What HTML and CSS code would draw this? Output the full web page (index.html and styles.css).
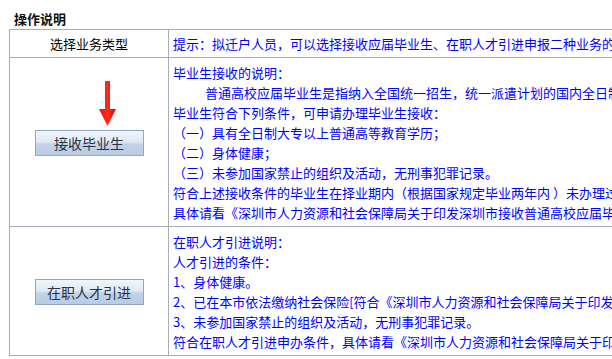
FILE: index.html
```html
<!DOCTYPE html>
<html lang="zh-CN">
<head>
    <meta charset="UTF-8">
    <title>操作说明</title>
    <link rel="stylesheet" href="styles.css">
</head>
<body>
    <div class="page">
        <h3 class="title">操作说明</h3>
        <table class="guide">
            <tr class="head">
                <td class="type">选择业务类型</td>
                <td class="info">提示：拟迁户人员，可以选择接收应届毕业生、在职人才引进申报二种业务的其中一种进行申报。</td>
            </tr>
            <tr>
                <td class="type">
                    <span class="btn-wrap">
                        <svg class="arrow" width="17" height="45" viewBox="0 0 17 45">
                            <defs>
                                <linearGradient id="red" x1="0" y1="0" x2="1" y2="0">
                                    <stop offset="0" stop-color="#e81010"/>
                                    <stop offset="0.5" stop-color="#ff2a1a"/>
                                    <stop offset="1" stop-color="#e00808"/>
                                </linearGradient>
                            </defs>
                            <path d="M6 0 H11 V28 H17 L8.5 45 L0 28 H6 Z" fill="url(#red)"/>
                        </svg>
                        <button class="btn">接收毕业生</button>
                    </span>
                </td>
                <td class="info">
                    <p>毕业生接收的说明：</p>
                    <p class="indent">普通高校应届毕业生是指纳入全国统一招生，统一派遣计划的国内全日制普通高校应届毕业生。</p>
                    <p>毕业生符合下列条件，可申请办理毕业生接收：</p>
                    <p>（一）具有全日制大专以上普通高等教育学历；</p>
                    <p>（二）身体健康；</p>
                    <p>（三）未参加国家禁止的组织及活动，无刑事犯罪记录。</p>
                    <p>符合上述接收条件的毕业生在择业期内（根据国家规定毕业两年内 ）未办理过就业手续的，可申请办理接收。</p>
                    <p>具体请看《深圳市人力资源和社会保障局关于印发深圳市接收普通高校应届毕业生实施办法的通知》</p>
                </td>
            </tr>
            <tr>
                <td class="type">
                    <button class="btn">在职人才引进</button>
                </td>
                <td class="info">
                    <p>在职人才引进说明：</p>
                    <p>人才引进的条件：</p>
                    <p>1、身体健康。</p>
                    <p>2、已在本市依法缴纳社会保险[符合《深圳市人力资源和社会保障局关于印发深圳市在职人才引进实施办法的通知》]</p>
                    <p>3、未参加国家禁止的组织及活动，无刑事犯罪记录。</p>
                    <p>符合在职人才引进申办条件，具体请看《深圳市人力资源和社会保障局关于印发深圳市在职人才引进实施办法的通知》</p>
                </td>
            </tr>
        </table>
    </div>
</body>
</html>
```

FILE: styles.css
```css
* { margin: 0; padding: 0; box-sizing: border-box; }
html, body { overflow: hidden; }
body { font-family: "Noto Sans CJK SC", "Noto Sans", sans-serif; font-size: 13px; color: #000; background: #fff; }
.page { padding: 10px 9px 0; width: 1200px; }
.title { font-size: 13px; font-weight: bold; line-height: 18px; padding-left: 5px; margin-bottom: 1px; color: #111; }
.guide { border-collapse: collapse; width: 1150px; }
.guide td { border: 1px solid #a7aebb; padding: 5px 4px 3px; line-height: 20px; vertical-align: middle; }
.guide .head td { padding: 3px 4px; line-height: 21px; }
.guide .type { width: 159px; text-align: center; }
.guide .info { color: #0000ff; white-space: nowrap; }
.indent { text-indent: 32px; }
.btn-wrap { position: relative; display: inline-block; }
.arrow { position: absolute; left: 64px; top: -49px; }
.btn { width: 109px; height: 26px; border: 1px solid #8ea7cb; background: linear-gradient(#f2f6fb 0%, #dfe8f3 45%, #c2d3e8 55%, #b9cbe3 100%); font-family: "Noto Sans CJK SC", sans-serif; font-size: 14px; color: #283444; cursor: pointer; vertical-align: middle; }
```
